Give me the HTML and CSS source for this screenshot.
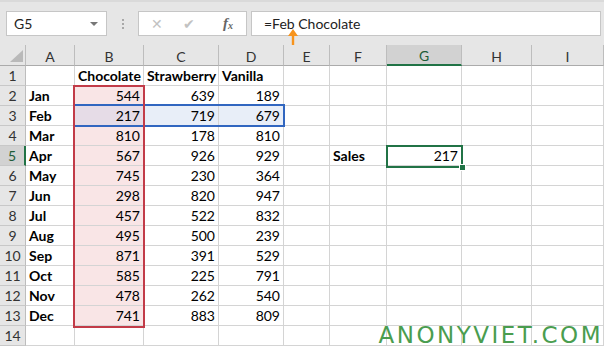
FILE: index.html
```html
<!DOCTYPE html>
<html lang="en">
<head>
    <meta charset="UTF-8">
    <title>Excel - Intersect</title>
    <link rel="stylesheet" href="styles.css">
</head>
<body>
    <div class="window">
        <div class="toolbar">
            <div class="name-box">
                <span>G5</span>
                <span class="caret"></span>
            </div>
            <div class="grip"><i></i><i></i><i></i></div>
            <div class="fx-buttons">
                <span class="btn-x">&#x2715;</span>
                <span class="btn-ok">&#x2714;</span>
                <span class="btn-fx">f<sub>x</sub></span>
            </div>
            <div class="formula">=Feb Chocolate</div>
            <svg class="pointer" width="10" height="16" viewBox="0 0 10 16">
                <path d="M5 0 L10 7 L6.2 7 L6.2 16 L3.8 16 L3.8 7 L0 7 Z" fill="#f7941d"/>
            </svg>
        </div>

        <div class="sheet" id="sheet">
            <div class="box box-blue"></div>
            <div class="box box-red"></div>
            <div class="box box-green"><span class="handle"></span></div>
        </div>

        <div class="watermark">ANONYVIET.COM</div>
    </div>

    <script>
        const cols = ['A', 'B', 'C', 'D', 'E', 'F', 'G', 'H', 'I'];
        const months = ['Jan','Feb','Mar','Apr','May','Jun','Jul','Aug','Sep','Oct','Nov','Dec'];
        const choc = [544,217,810,567,745,298,457,495,871,585,478,741];
        const straw = [639,719,178,926,230,820,522,500,391,225,262,883];
        const van = [189,679,810,929,364,947,832,239,529,791,540,809];

        const sheet = document.getElementById('sheet');

        function addCell(cls, text) {
            const cell = document.createElement('div');
            cell.className = cls;
            if (text !== undefined) cell.textContent = text;
            sheet.appendChild(cell);
            return cell;
        }

        // Header row
        addCell('corner');
        cols.forEach(c => addCell(c === 'G' ? 'col-head active' : 'col-head', c));

        // Body rows 1..14
        for (let r = 1; r <= 14; r++) {
            addCell(r === 5 ? 'row-head active' : 'row-head', r);
            for (let c = 0; c < cols.length; c++) {
                let cls = 'cell';
                let text = '';
                if (r === 1 && c >= 1 && c <= 3) {
                    cls += ' bold';
                    text = ['Chocolate', 'Strawberry', 'Vanilla'][c - 1];
                } else if (r >= 2 && r <= 13) {
                    const i = r - 2;
                    if (c === 0) { cls += ' bold'; text = months[i]; }
                    if (c === 1) { cls += ' num pink'; text = choc[i]; }
                    if (c === 2) { cls += ' num'; text = straw[i]; }
                    if (c === 3) { cls += ' num'; text = van[i]; }
                    if (r === 3 && c === 1) cls = 'cell num mixed';
                    if (r === 3 && (c === 2 || c === 3)) cls += ' blue';
                }
                if (r === 5 && c === 5) { cls += ' bold'; text = 'Sales'; }
                if (r === 5 && c === 6) { cls += ' num'; text = 217; }
                addCell(cls, text);
            }
        }
    </script>
</body>
</html>
```

FILE: styles.css
```css
* {
    box-sizing: border-box;
}

body {
    margin: 0;
    font-family: Lato, 'Liberation Sans', sans-serif;
    background: #fff;
}

.window {
    position: relative;
    width: 604px;
    height: 347px;
    overflow: hidden;
}

/* formula bar */
.toolbar {
    position: relative;
    height: 45px;
    background: #e6e6e6;
    border-top: 2px solid #dadada;
    display: flex;
    align-items: flex-start;
    padding: 9px 3px 0 6px;
}

.name-box {
    width: 101px;
    height: 25px;
    background: #fff;
    border: 1px solid #c6c6c6;
    display: flex;
    align-items: center;
    justify-content: space-between;
    padding: 0 8px 0 7px;
    font-size: 14px;
    color: #222;
}

.caret {
    width: 0;
    height: 0;
    border-left: 4px solid transparent;
    border-right: 4px solid transparent;
    border-top: 4px solid #777;
}

.grip {
    width: 31px;
    height: 25px;
    display: flex;
    flex-direction: column;
    align-items: center;
    justify-content: center;
    gap: 2px;
}

.grip i {
    width: 2px;
    height: 2px;
    background: #a8a8a8;
}

.fx-buttons {
    width: 109px;
    height: 25px;
    background: #fff;
    border: 1px solid #c6c6c6;
    display: flex;
    align-items: center;
    padding: 0 0 0 12px;
    color: #c2c2c2;
}

.btn-x {
    font-size: 14px;
    width: 32px;
}

.btn-ok {
    font-size: 14px;
    width: 40px;
}

.btn-fx {
    font-family: 'Liberation Serif', serif;
    font-style: italic;
    font-weight: bold;
    font-size: 15px;
    color: #666;
}

.btn-fx sub {
    font-size: 10px;
    vertical-align: -1px;
}

.formula {
    flex: 1;
    height: 25px;
    margin-left: 4px;
    background: #fff;
    border: 1px solid #c6c6c6;
    padding: 0 0 0 12px;
    font-size: 14px;
    line-height: 23px;
    color: #222;
}

.pointer {
    position: absolute;
    left: 288px;
    top: 27px;
}

/* worksheet */
.sheet {
    position: relative;
    display: grid;
    grid-template-columns: 26px 49px 69px 75px 65px 46px 57px 75px 70px 72px;
    grid-template-rows: 21px;
    grid-auto-rows: 20px;
    font-size: 14px;
    color: #000;
}

.corner,
.col-head,
.row-head {
    background: #e6e6e6;
    color: #333;
    display: flex;
    align-items: center;
    justify-content: center;
}

.corner {
    border-right: 1px solid #bdbdbd;
    border-bottom: 1px solid #ababab;
    position: relative;
}

.corner::after {
    content: '';
    position: absolute;
    right: 2px;
    bottom: 3px;
    border-left: 13px solid transparent;
    border-bottom: 12px solid #b9b9b9;
}

.col-head {
    border-right: 1px solid #bdbdbd;
    border-bottom: 1px solid #ababab;
    padding-top: 2px;
}

.col-head.active {
    background: #d2d2d2;
    color: #1e5c38;
    border-bottom: 2px solid #217346;
}

.row-head {
    border-right: 1px solid #bdbdbd;
    border-bottom: 1px solid #c8c8c8;
}

.row-head.active {
    background: #d2d2d2;
    color: #1e5c38;
    border-right: 2px solid #217346;
}

.cell {
    border-right: 1px solid #d4d4d4;
    border-bottom: 1px solid #d4d4d4;
    padding: 0 3px;
    display: flex;
    align-items: center;
    white-space: nowrap;
    overflow: visible;
}

.cell.bold {
    font-weight: bold;
}

.cell.num {
    justify-content: flex-end;
}

.cell.pink {
    background: #f9e5e6;
}

.cell.blue {
    background: #e8eef8;
}

.cell.mixed {
    background: #e6dce7;
}

/* selection outlines */
.box {
    position: absolute;
    z-index: 2;
    pointer-events: none;
}

.box-red {
    left: 73px;
    top: 40px;
    width: 72px;
    height: 243px;
    border: 2px solid #c23b48;
}

.box-blue {
    left: 75px;
    top: 59px;
    width: 210px;
    height: 23px;
    border: 2px solid #3166c0;
    border-left: none;
}

.box-green {
    left: 386px;
    top: 100px;
    width: 77px;
    height: 23px;
    border: 2px solid #217346;
}

.handle {
    position: absolute;
    right: -5px;
    bottom: -5px;
    width: 7px;
    height: 7px;
    background: #217346;
    border: 1px solid #fff;
}

.watermark {
    position: absolute;
    right: 1px;
    bottom: 1px;
    height: 22px;
    font-family: 'DejaVu Sans', sans-serif;
    font-size: 23px;
    line-height: 22px;
    color: #4a9d4f;
    letter-spacing: 2.5px;
}
```
